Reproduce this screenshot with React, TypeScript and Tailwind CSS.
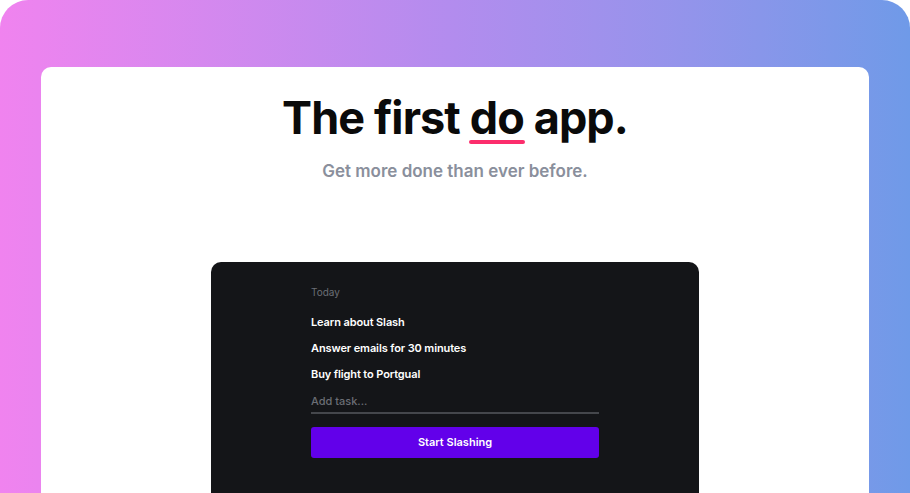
export default function App() {
  const tasks = ['Learn about Slash', 'Answer emails for 30 minutes', 'Buy flight to Portgual'];

  return (
    <div className="w-[910px] h-[493px] bg-white overflow-hidden" style={{ fontFamily: 'Inter, "Noto Sans", sans-serif' }}>
      <div className="h-full rounded-t-[28px] bg-gradient-to-r from-[#f083ef] via-[#b28cee] to-[#6f9ae8] pt-[67px] px-[41px]">
        <div className="h-full bg-white rounded-t-[10px] flex flex-col items-center">
          <h1 className="mt-[25px] text-[45px] leading-[52px] font-bold tracking-[-0.02em] text-[#0a0a0a]">
            The first{' '}
            <span className="relative">
              do
              <span className="absolute left-[-1px] right-[-1px] bottom-[1px] h-[4px] rounded-full bg-[#fc2d6c]" />
            </span>{' '}
            app.
          </h1>
          <p className="mt-[17px] text-[17px] leading-5 font-semibold text-[#8a8f9c]">
            Get more done than ever before.
          </p>

          <div className="mt-[81px] w-[488px] flex-1 bg-[#141518] rounded-t-[10px] pt-[22px] pl-[100px] pr-[100px]">
            <div className="text-[10px] leading-4 text-[#6b6e75]">Today</div>
            <div className="mt-[14px] flex flex-col gap-[10px]">
              {tasks.map(t => (
                <div key={t} className="text-[11px] leading-4 font-semibold text-white tracking-[-0.01em]">{t}</div>
              ))}
            </div>
            <div className="mt-[11px] border-b-2 border-[#45474c] pb-[3px] text-[11px] leading-4 font-medium text-[#6b6e75]">
              Add task...
            </div>
            <button className="mt-[13px] w-full h-[31px] rounded-[3px] bg-[#6200ea] text-[11px] font-semibold text-white">
              Start Slashing
            </button>
          </div>
        </div>
      </div>
    </div>
  );
}
